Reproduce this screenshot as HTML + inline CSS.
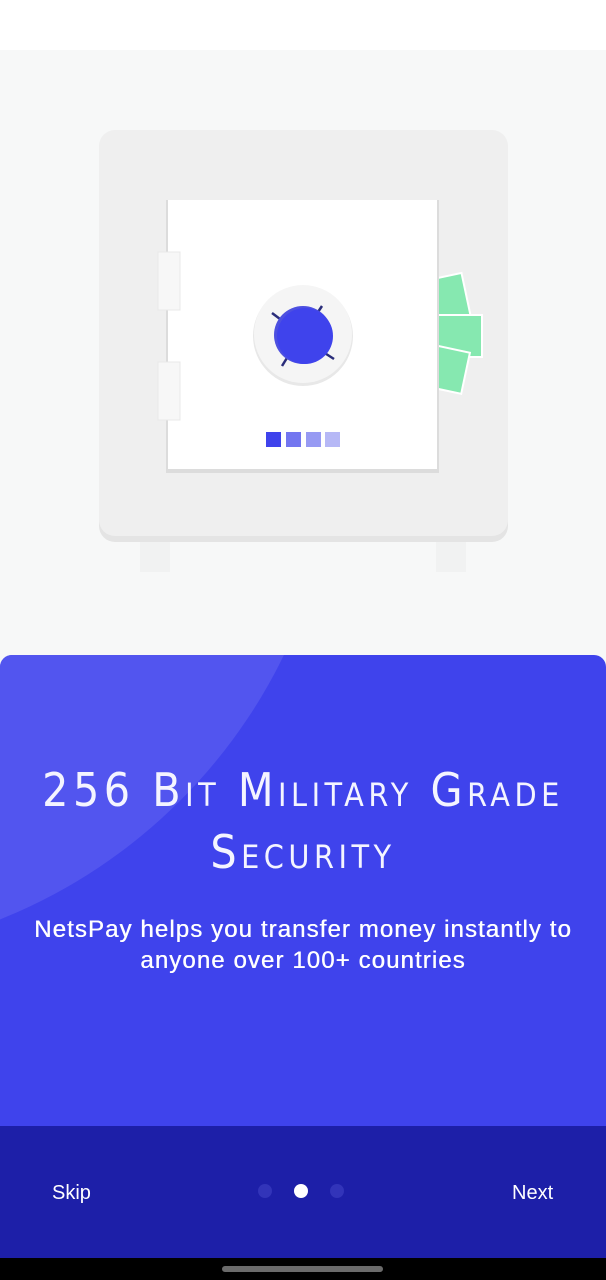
<!DOCTYPE html>
<html><head><meta charset="utf-8"><style>
*{margin:0;padding:0;box-sizing:border-box}
body{width:606px;height:1280px;overflow:hidden;background:#f7f8f8;font-family:"Liberation Sans",sans-serif;position:relative}
.top{position:absolute;left:0;top:0;width:606px;height:50px;background:#fff}
.card{position:absolute;left:0;top:655px;width:606px;height:471px;background:#3f43ec;border-radius:12px 12px 0 0;overflow:hidden}
.circ{position:absolute;left:-738px;top:-773px;width:1076px;height:1076px;border-radius:50%;background:#5255ef}
h1{position:absolute;left:-10px;top:104px;width:626px;text-align:center;color:#f4f4ff;font-family:"DejaVu Sans Condensed","DejaVu Sans",sans-serif;font-stretch:condensed;font-weight:200;font-size:46px;font-variant:small-caps;line-height:62px;letter-spacing:4.5px}
p{position:absolute;left:-10px;top:259px;width:626px;text-align:center;color:#fff;font-size:24px;line-height:31px;letter-spacing:1.1px;text-shadow:0.4px 0 0 #fff}
.bar{position:absolute;left:0;top:1126px;width:606px;height:132px;background:#1d1fa8;color:#fff;font-size:20px}
.nav{position:absolute;left:0;top:1258px;width:606px;height:22px;background:#000}
.pill{position:absolute;left:222px;top:8px;width:161px;height:6px;border-radius:3px;background:#6b6b6b}
.dot{position:absolute;top:58px;width:14px;height:14px;border-radius:50%;background:#3234b9}
</style></head><body>
<div class="top"></div>
<svg style="position:absolute;left:0;top:50px" width="606" height="605">
<rect x="140" y="470" width="30" height="52" fill="#f1f2f2"/>
<rect x="436" y="470" width="30" height="52" fill="#f1f2f2"/>
<rect x="99" y="82" width="409" height="410" rx="16" fill="#e4e4e4"/>
<rect x="99" y="80" width="409" height="406" rx="16" fill="#efefef"/>
<g transform="rotate(-12 455 255)"><rect x="430" y="225" width="38" height="60" fill="#86e8b0" stroke="#fff" stroke-width="2"/></g>
<rect x="432" y="265" width="50" height="42" fill="#86e8b0" stroke="#fff" stroke-width="2"/>
<g transform="rotate(12 455 320)"><rect x="430" y="300" width="36" height="42" fill="#86e8b0" stroke="#fff" stroke-width="2"/></g>
<rect x="166" y="150" width="273" height="273" fill="#dcdcdc"/>
<rect x="168" y="150" width="269" height="269" fill="#fff"/>
<rect x="158" y="202" width="22" height="58" fill="#f7f7f7" stroke="#e8e8e8"/>
<rect x="158" y="312" width="22" height="58" fill="#f7f7f7" stroke="#e8e8e8"/>
<circle cx="303" cy="286" r="50" fill="#e8e8e8"/>
<circle cx="303" cy="284" r="49" fill="#f5f5f5"/>
<g stroke="#2a2d7a" stroke-width="2.5"><line x1="272" y1="263" x2="288" y2="275"/><line x1="322" y1="256" x2="314" y2="268"/><line x1="334" y1="309" x2="320" y2="300"/><line x1="282" y1="316" x2="290" y2="303"/></g>
<circle cx="303" cy="285" r="29" fill="#4d50e0"/>
<circle cx="305" cy="286" r="28" fill="#3f43ec"/>
<rect x="266" y="382" width="15" height="15" fill="#3f43ec"/>
<rect x="286" y="382" width="15" height="15" fill="#7376f0"/>
<rect x="306" y="382" width="15" height="15" fill="#979af3"/>
<rect x="325" y="382" width="15" height="15" fill="#b6b8f6"/>
</svg>
<div class="card"><div class="circ"></div>
<h1>256 Bit Military Grade<br>Security</h1>
<p>NetsPay helps you transfer money instantly to<br>anyone over 100+ countries</p></div>
<div class="bar">
<div style="position:absolute;left:52px;top:56px">Skip</div>
<div class="dot" style="left:258px"></div>
<div class="dot" style="left:294px;background:#fff"></div>
<div class="dot" style="left:330px"></div>
<div style="position:absolute;left:512px;top:56px">Next</div>
</div>
<div class="nav"><div class="pill"></div></div>
</body></html>
